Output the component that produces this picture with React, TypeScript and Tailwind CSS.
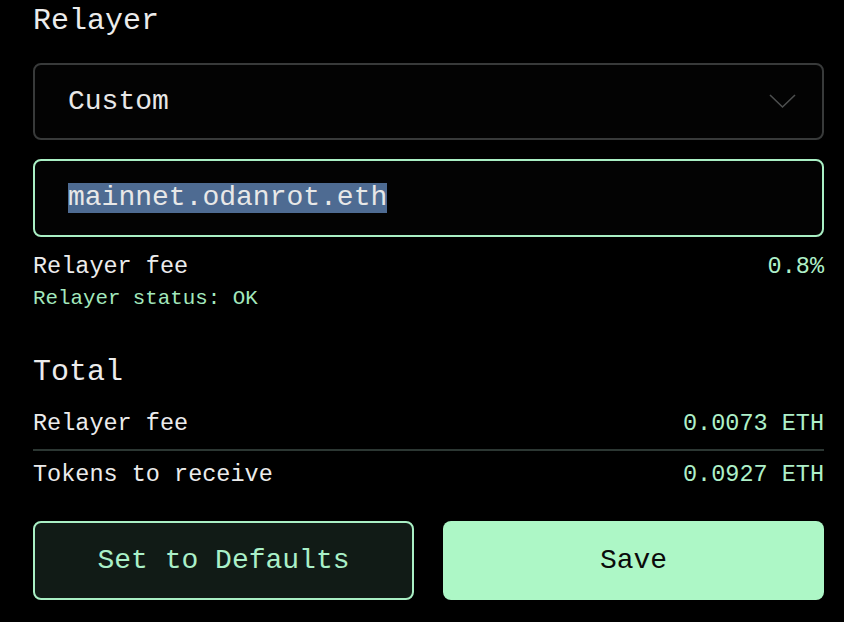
import React from 'react';

const mono = "font-['Liberation_Mono','DejaVu_Sans_Mono',monospace]";

function Row({ label, value, className = '' }: { label: string; value: string; className?: string }) {
  return (
    <div className={`flex items-center justify-between text-[23.5px] ${className}`}>
      <span className="text-[#ececec]">{label}</span>
      <span className="text-[#aef0c9]">{value}</span>
    </div>
  );
}

export default function App() {
  return (
    <div className={`min-h-screen w-full bg-black ${mono}`}>
      <div className="ml-[33px] w-[791px] flex flex-col">
        {/* Relayer */}
        <h2 className="h-[42px] leading-[42px] text-[30px] text-[#ececec]">Relayer</h2>

        <button className="mt-[21px] h-[77px] w-full rounded-[8px] border-2 border-[#383a3a] bg-[#030303] pl-[33px] pr-[26px] flex items-center justify-between">
          <span className="text-[28px] text-[#e8e8e8]">Custom</span>
          <svg width="27" height="15" viewBox="0 0 27 15" fill="none">
            <polyline points="1,1 13.5,13 26,1" stroke="#4d4f4f" strokeWidth="1.6" />
          </svg>
        </button>

        <div className="mt-[19px] h-[78px] w-full rounded-[8px] border-2 border-[#a9efc4] bg-[#030303] pl-[33px] flex items-center">
          <span className="text-[28px] leading-[30px] text-[#e8e8e8] bg-[#4e6b92]">mainnet.odanrot.eth</span>
        </div>

        <Row label="Relayer fee" value="0.8%" className="mt-[13px] h-[34px]" />
        <div className="h-[30px] leading-[30px] text-[20.8px] text-[#a3e8bd]">Relayer status: OK</div>

        {/* Total */}
        <h2 className="mt-[37px] h-[42px] leading-[42px] text-[30px] text-[#ececec]">Total</h2>
        <Row label="Relayer fee" value="0.0073 ETH" className="mt-[6px] h-[50px]" />
        <div className="h-[2px] bg-[#2c3733]" />
        <Row label="Tokens to receive" value="0.0927 ETH" className="h-[48px]" />

        <div className="mt-[22px] grid grid-cols-2 gap-[29px]">
          <button className="h-[79px] rounded-[8px] border-2 border-[#a9efc4] bg-[#111b16] text-[28px] text-[#aaf0c8]">
            Set to Defaults
          </button>
          <button className="h-[79px] rounded-[8px] bg-[#adf7c6] text-[28px] text-[#0a0a0a]">
            Save
          </button>
        </div>
      </div>
    </div>
  );
}
